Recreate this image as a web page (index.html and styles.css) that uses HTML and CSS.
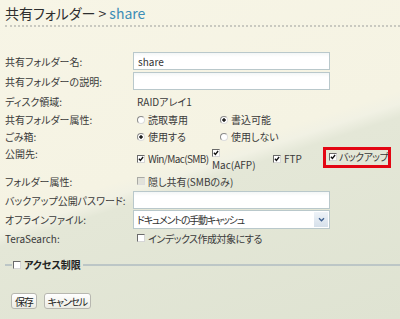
FILE: index.html
```html
<!DOCTYPE html>
<html lang="ja">
<head>
    <meta charset="UTF-8">
    <title>共有フォルダー設定</title>
    <link rel="stylesheet" href="styles.css">
</head>
<body>
    <div class="page">
        <h1 class="title">共有フォルダー &gt; <span class="cur">share</span></h1>

        <form class="form">
            <div class="lbl">共有フォルダー名:</div>
            <div class="fld"><input class="txt" type="text" value="share"></div>

            <div class="lbl">共有フォルダーの説明:</div>
            <div class="fld"><input class="txt" type="text" value=""></div>

            <div class="lbl">ディスク領域:</div>
            <div class="fld val">RAIDアレイ1</div>

            <div class="lbl">共有フォルダー属性:</div>
            <div class="fld val">
                <span class="opt"><span class="radio"></span>読取専用</span>
                <span class="opt"><span class="radio on"></span>書込可能</span>
            </div>

            <div class="lbl">ごみ箱:</div>
            <div class="fld val">
                <span class="opt"><span class="radio on"></span>使用する</span>
                <span class="opt"><span class="radio"></span>使用しない</span>
            </div>

            <div class="lbl top">公開先:</div>
            <div class="fld val top pub">
                <span class="opt smb"><span class="cb"><svg viewBox="0 0 8 8"><path d="M1.2 3.6 L3.2 5.8 L6.8 1.3" /></svg></span>Win/Mac(SMB)</span>
                <span class="opt afp"><span class="cb"><svg viewBox="0 0 8 8"><path d="M1.2 3.6 L3.2 5.8 L6.8 1.3" /></svg></span><br>Mac(AFP)</span>
                <span class="opt ftp"><span class="cb"><svg viewBox="0 0 8 8"><path d="M1.2 3.6 L3.2 5.8 L6.8 1.3" /></svg></span>FTP</span>
                <span class="opt backup"><span class="cb"><svg viewBox="0 0 8 8"><path d="M1.2 3.6 L3.2 5.8 L6.8 1.3" /></svg></span>バックアップ</span>
            </div>

            <div class="lbl">フォルダー属性:</div>
            <div class="fld val">
                <span class="opt"><span class="cb off"></span>隠し共有(SMBのみ)</span>
            </div>

            <div class="lbl">バックアップ公開パスワード:</div>
            <div class="fld"><input class="txt" type="password" value=""></div>

            <div class="lbl">オフラインファイル:</div>
            <div class="fld">
                <div class="sel">
                    <select>
                        <option>ドキュメントの手動キャッシュ</option>
                    </select>
                    <span class="sel-arrow"><svg viewBox="0 0 8 6"><path d="M1 1.5 L4 4.5 L7 1.5" /></svg></span>
                </div>
            </div>

            <div class="lbl">TeraSearch:</div>
            <div class="fld val">
                <span class="opt tight"><span class="cb"></span>インデックス作成対象にする</span>
            </div>
        </form>

        <fieldset class="access">
            <legend><span class="cb"></span>アクセス制限</legend>
        </fieldset>

        <div class="buttons">
            <button type="button">保存</button>
            <button type="button">キャンセル</button>
        </div>
    </div>
</body>
</html>
```

FILE: styles.css
```css
html {
    min-height: 100%;
    background: linear-gradient(162deg, #f7f5e6 0%, #f5f3e3 49%, #f1f1e4 52%, #e4e7d7 55%, #dfe3d2 100%);
}
body {
    margin: 0;
    font-family: "Noto Sans CJK JP", sans-serif;
    font-size: 10px;
    line-height: 13px;
    color: #3a3a3a;
    font-feature-settings: "palt";
}
input, select, button {
    font-family: "Noto Sans CJK JP", sans-serif;
    font-size: 10px;
    font-feature-settings: "palt";
}
.page {
    padding-left: 5px;
}
.title {
    margin: 0;
    padding-top: 2px;
    height: 23px;
    line-height: 23px;
    font-size: 14px;
    font-weight: normal;
    color: #2e2e2e;
    border-bottom: 2px dotted #c9c9c0;
}
.title .cur {
    color: #3d8db6;
}
.form {
    display: grid;
    grid-template-columns: 128px 1fr;
    grid-template-rows: 20px 20px 20px 17px 17px 27px 18px 20px 19px 18px;
    align-items: center;
    margin-top: 24px;
}
.lbl {
    white-space: nowrap;
}
.lbl.top, .fld.top {
    align-self: start;
    padding-top: 2px;
}
.fld.val {
    padding-left: 4px;
    display: flex;
    align-items: center;
    white-space: nowrap;
}
.txt {
    box-sizing: border-box;
    width: 197px;
    height: 18px;
    margin: 0;
    padding: 0 4px;
    border: 1px solid #b9c8cb;
    background: linear-gradient(#f3f6f6, #fff 4px);
    color: #333;
}
.opt {
    display: inline-flex;
    align-items: center;
    width: 83px;
    white-space: nowrap;
}
.opt.tight {
    width: auto;
    letter-spacing: -0.5px;
}
.radio {
    box-sizing: border-box;
    width: 8px;
    height: 8px;
    margin-right: 3px;
    border-radius: 50%;
    border: 1px solid;
    border-color: #8a8a8a #dcdcdc #dcdcdc #8a8a8a;
    background: #fff;
}
.radio.on {
    background: radial-gradient(circle, #1e1e1e 1.4px, #fff 2px);
}
.cb {
    box-sizing: border-box;
    display: inline-block;
    width: 8px;
    height: 8px;
    margin-right: 3px;
    border: 1px solid;
    border-color: #6a6a6a #d6d6d6 #d6d6d6 #6a6a6a;
    background: #fff;
    flex: none;
}
.cb svg {
    display: block;
    width: 6px;
    height: 6px;
}
.cb svg path {
    fill: none;
    stroke: #111;
    stroke-width: 1.8;
}
.cb.off {
    background: #e2e2da;
    border-color: #a9a9a4 #dedede #dedede #a9a9a4;
}
.pub {
    align-items: flex-start;
    line-height: 12px;
}
.pub .smb {
    width: 75px;
    letter-spacing: -0.6px;
}
.pub .afp {
    display: inline-block;
    width: 61px;
    white-space: normal;
}
.pub .afp .cb {
    vertical-align: middle;
    margin-top: -2px;
}
.pub .ftp {
    width: 50px;
}
.pub .backup {
    box-sizing: border-box;
    width: 68px;
    height: 21px;
    margin-top: -4px;
    padding-left: 3px;
    border: 3px solid #e30613;
    overflow: hidden;
    letter-spacing: -0.6px;
}
.pub .backup .cb {
    margin-right: 2px;
}
.sel {
    position: relative;
    width: 197px;
}
.sel select {
    box-sizing: border-box;
    width: 100%;
    height: 19px;
    margin: 0;
    padding: 0 18px 0 3px;
    border: 1px solid #b9c8cb;
    background: #fff;
    color: #333;
    letter-spacing: -1.2px;
    appearance: none;
    -webkit-appearance: none;
}
.sel-arrow {
    position: absolute;
    top: 2px;
    right: 2px;
    width: 14px;
    height: 15px;
    background: linear-gradient(#eef3f8, #d6e0ea);
    display: flex;
    align-items: center;
    justify-content: center;
}
.sel-arrow svg {
    width: 7px;
    height: 5px;
}
.sel-arrow path {
    fill: none;
    stroke: #3d5f8f;
    stroke-width: 1.6;
}
.access {
    margin: 11px 0 0;
    padding: 0 0 0 7px;
    border: none;
    border-top: 2px solid #bcc6c6;
    min-width: 0;
}
.access legend {
    padding: 0 2px 0 1px;
    display: flex;
    align-items: center;
    font-weight: bold;
    color: #222;
}
.buttons {
    margin-top: 22px;
    padding-left: 6px;
    display: flex;
    gap: 7px;
}
.buttons button {
    height: 16px;
    padding: 0 3px;
    line-height: 13px;
    letter-spacing: -1.2px;
    color: #222;
    border: 1px solid #b7b7b0;
    border-radius: 3px;
    background: linear-gradient(#ffffff, #ecece4);
}
```
